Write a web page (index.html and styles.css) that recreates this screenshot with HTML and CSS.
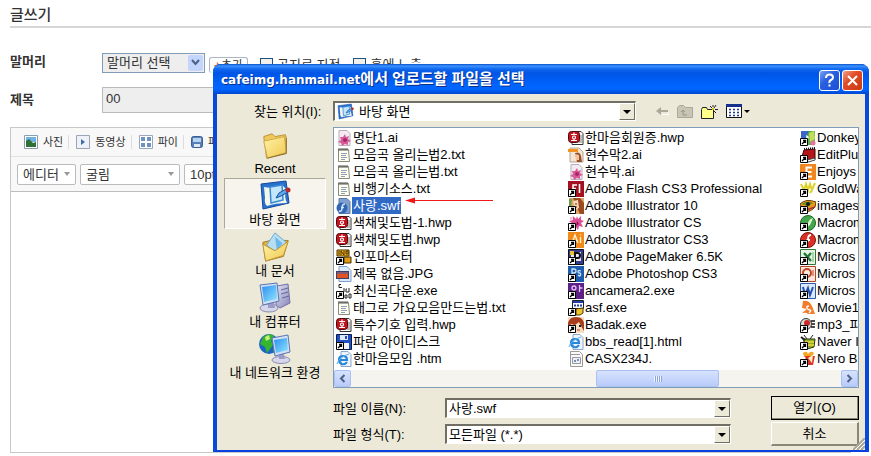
FILE: index.html
```html
<!DOCTYPE html>
<html lang="ko">
<head>
<meta charset="UTF-8" />
<meta name="viewport" content="width=device-width, initial-scale=1" />
<title>글쓰기</title>
<link rel="stylesheet" href="styles.css">
</head>
<body>

<!-- 아이콘 -->
<svg class="sprite" width="0" height="0" aria-hidden="true">
  <defs>
    <linearGradient id="gFolder" x1="0" y1="0" x2="1" y2="1"><stop offset="0" stop-color="#fff3a8"/><stop offset="1" stop-color="#f0c850"/></linearGradient>
    <linearGradient id="gScreen" x1="0" y1="0" x2="1" y2="1"><stop offset="0" stop-color="#2c8ff0"/><stop offset="1" stop-color="#8fe6ff"/></linearGradient>
    <linearGradient id="gCase" x1="0" y1="0" x2="1" y2="1"><stop offset="0" stop-color="#e4e4f6"/><stop offset="1" stop-color="#8484b8"/></linearGradient>
  </defs>

  <symbol id="cut" viewBox="0 0 16 16"><path d="M.5 8.500h7v7h-7z" fill="#fff" stroke="#000"/><path d="M2 14l3-3M3 10.500h2.500V13" stroke="#000" stroke-width="1.300" fill="none"/></symbol>
  <symbol id="desktop" viewBox="0 0 32 32"><path d="M2 5l25-3 3 22-26 6z" fill="#2a70cf" stroke="#124a9c"/><path d="M5 8q10 2 18-2l4 4q-2 8 1 14-12 0-20 3-3-3-2-8z" fill="#f3f7ea"/><path d="M11 8l12-2 1 15-12 3z" fill="#c4e6fb" stroke="#3788d5" stroke-width="1.500"/><path d="M17 19l3-5 7-4 2 3-7 4z" fill="#5fa9e8" stroke="#15509e"/><circle cx="29" cy="11" r="2.500" fill="#b72b2b"/></symbol>
  <symbol id="folder" viewBox="0 0 32 32"><path d="M4 7l9-3 3 3 11-2 1 3v17L7 30z" fill="#efc95c" stroke="#b58f34"/><path d="M4 12l22-5 2 17L8 30z" fill="url(#gFolder)" stroke="#d2a845"/><path d="M8 30l20-5V9" stroke="#866b2b" fill="none"/></symbol>
  <symbol id="documents" viewBox="0 0 32 32"><path d="M3 11l8-2 19 0-5 17L6 31z" fill="#e2b145" stroke="#a47c20"/><path d="M16 1l12 10-9 12-12-9z" fill="#b8def4" stroke="#6ba9cf"/><path d="M16 5l8 7-6 8" fill="#6cb8e8"/><path d="M3 13l13 7 14-10-5 15L6 31z" fill="url(#gFolder)" stroke="#c0912e"/></symbol>
  <symbol id="computer" viewBox="0 0 32 32"><path d="M18 5l11-2 2 19-10 5-4-3z" fill="url(#gCase)" stroke="#7272a6"/><path d="M22 9l7-2M22 13l7-2M23 17l7-2" stroke="#66669a"/><ellipse cx="10" cy="27" rx="9" ry="4" fill="#d6d6ec" stroke="#8a8ab0"/><path d="M9 20h6l1 7h-7z" fill="#9c9cc8"/><path d="M1 4l17-2 2 18-16 4z" fill="#d5dff4" stroke="#5577b5"/><path d="M3 6l14-2 1 14-13 3z" fill="url(#gScreen)"/></symbol>
  <symbol id="network" viewBox="0 0 32 32"><circle cx="10" cy="12" r="10" fill="#1b64c4"/><path d="M4 5q6-5 11-1l-3 5 2 4-6 8-2-6-5-3zM14 17l5-4v6l-4 3z" fill="#37b42e"/><path d="M6 5l4-2 1 4-4 2z" fill="#c7f07a"/><ellipse cx="22" cy="28" rx="9" ry="3.500" fill="#d6d6ec" stroke="#8a8ab0"/><path d="M20 22h5l1 5h-6z" fill="#9c9cc8"/><path d="M13 6l16-3 2 17-15 4z" fill="#d5dff4" stroke="#5577b5"/><path d="M15 8l13-2 1 12-12 3z" fill="url(#gScreen)"/></symbol>

  <symbol id="ai-pink" viewBox="0 0 16 16"><path d="M3 .5h8l3 3v12H3z" fill="#f2ecf2" stroke="#b9adb9"/><path d="M9 4l1 3 3-1-1 3 3 2-3 1v3l-3-1-3 2-1-3-3-1 3-2-1-3 3 0z" fill="#d95a98"/><circle cx="9" cy="10" r="2" fill="#a72567"/></symbol>
  <symbol id="txt" viewBox="0 0 16 16"><path d="M2.500 2.500h10l1 12h-11z" fill="#fffef2" stroke="#8a8a78"/><path d="M3 1v3M5 1v3M7 1v3M9 1v3M11 1v3" stroke="#555"/><path d="M5 6.500h6M5 8.500h5M5 10.500h6M5 12.500h4" stroke="#8fa0b0"/></symbol>
  <symbol id="swf" viewBox="0 0 16 16"><path d="M3 .5h8l3 3v12H3z" fill="#7f9fce" stroke="#5878ac"/><circle cx="6" cy="10" r="5.500" fill="#2e66b4"/><path d="M9 6q-3 0-3 4t-3 3M5 9.500h3" stroke="#d5e4fa" fill="none" stroke-width="1.500"/></symbol>
  <symbol id="hwp" viewBox="0 0 16 16"><path d="M7 1.500h6l2 2v11H4V8z" fill="#fff" stroke="#333"/><path d="M11 6h3M11 8h3M11 10h3M11 12h3" stroke="#777"/><rect x=".5" y="1.500" width="11" height="11" rx="3" fill="#c4141f" stroke="#4c060a"/><path d="M6 2.500v2M3 4.500h6M6 9v1.500M3 10.500h6" stroke="#fff" stroke-width="1.200"/><circle cx="6" cy="7.500" r="1.500" stroke="#fff" stroke-width="1.200" fill="none"/></symbol>
  <symbol id="info" viewBox="0 0 16 16"><path d="M1 1h12v6H1z" fill="#f5b81c" stroke="#4a2e00"/><path d="M3 2v4M5 6V2l3 4V2M10 2h2v3h-2z" stroke="#4a2e00" fill="none"/><path d="M8 8h7v6H8z" fill="#e09b14" stroke="#4a2e00"/></symbol>
  <symbol id="jpg" viewBox="0 0 16 16"><path d="M3 .5h8l4 4v11H3z" fill="#dbe8f8" stroke="#7f9fcc"/><path d="M0 5h13v8H0z" fill="#3a3f6c"/><path d="M1 8h11v4H1z" fill="#e0541f"/><path d="M1 6h11v2H1z" fill="#8a5a70"/></symbol>
  <symbol id="cdown" viewBox="0 0 16 16"><path d="M5 1.500H3v3h3M8 5v4M11 6h-1v3h3V5M9 12h2v3H9zM13 11h2v4h-2z" stroke="#222" fill="none"/></symbol>
  <symbol id="disk" viewBox="0 0 16 16"><path d="M.5.500h15v15H2l-1.500-2z" fill="#1e50c0" stroke="#081a50"/><path d="M4 1h8v5H4z" fill="#dfe9fa"/><path d="M9 2h2v3H9z" fill="#1e50c0"/><path d="M4 9h9v6H4z" fill="#f4f4f4"/></symbol>
  <symbol id="ie" viewBox="0 0 16 16"><path d="M5 .5h7l3 3v12H5z" fill="#eef4fd" stroke="#8aa5cf"/><path d="M11 11q-2 3-5 2-3-1-3-4 0-4 4-4t4 4H4" stroke="#2a86d8" stroke-width="2.200" fill="none"/><path d="M1 13Q3 6 13 3" stroke="#57b4f0" fill="none"/></symbol>
  <symbol id="ai-face" viewBox="0 0 16 16"><path d="M2 1h9l4 4v10H2z" fill="#f4e6d4" stroke="#b3a38f"/><path d="M0 2h10v3H0z" fill="#f59322"/><path d="M7 6q5-2 6 3l1 6H9z" fill="#96502a"/><path d="M7 7l4 1v5H8z" fill="#f3c49c"/></symbol>
  <symbol id="venus" viewBox="0 0 16 16"><path d="M1 0h15v16H1z" fill="#dca46b"/><path d="M5 0h7l4 5v11h-4z" fill="#9b4a1f"/><path d="M5 3l5-1 1 8-4 2z" fill="#fbd6b4"/><path d="M1 1l3 0-1 8H1z" fill="#6c9c48"/><path d="M7 6h2M8 9h1" stroke="#6b2b12"/></symbol>
  <symbol id="fl" viewBox="0 0 16 16"><path d="M0 0h16v16H0z" fill="#a50f22"/><path d="M5 12V4h4M5 7.500h3M11.500 3v9" stroke="#fff" stroke-width="1.600" fill="none"/></symbol>
  <symbol id="flower" viewBox="0 0 16 16"><path d="M9 1l1 3 3-3v4l3 1-3 2 2 4-4-1-1 4-3-4-4 1 1-4-3-2 4-1V1l3 3z" fill="#db4d95"/><path d="M9 6l2 3-3 2z" fill="#8b1857"/><path d="M2 3h3M3 2v4" stroke="#f4a8cc"/></symbol>
  <symbol id="ai" viewBox="0 0 16 16"><path d="M0 0h16v16H0z" fill="#f08a1a"/><path d="M4 11l3-8 3 8M5 8.500h4M12.500 5v6M12.500 2.500v1" stroke="#fff0c8" stroke-width="1.400" fill="none"/></symbol>
  <symbol id="pm" viewBox="0 0 16 16"><path d="M.5.500h15v15H.5z" fill="#333b8c" stroke="#111"/><path d="M3 3h10v9H3z" fill="#e9e7f4"/><path d="M7 13V4h3q2 0 2 2.500T10 9H8" stroke="#111" stroke-width="2" fill="none"/><path d="M2 2h4v4H2z" fill="#e9bf3e"/></symbol>
  <symbol id="ps" viewBox="0 0 16 16"><path d="M0 0h16v16H0z" fill="#1d5dac"/><path d="M4 10V3h2q2 0 2 2T6 7H4M13 5q-3-1-3 .5t1.500 1.500T12.500 9 10 9" stroke="#cfe6ff" stroke-width="1.300" fill="none"/></symbol>
  <symbol id="an" viewBox="0 0 16 16"><path d="M0 0h16v16H0z" fill="#5b2185"/><circle cx="6" cy="5" r="2" stroke="#eabfff" fill="none" stroke-width="1.300"/><path d="M11.500 2v7M11.500 5h3" stroke="#eabfff" stroke-width="1.300" fill="none"/></symbol>
  <symbol id="asf" viewBox="0 0 16 16"><path d="M4.500.500h11v8h-11z" fill="#fff" stroke="#222"/><path d="M5 1h10v2H5z" fill="#1d3fa8"/><path d="M6 5.500h2m1 0h2m1 0h2" stroke="#1d3fa8" stroke-width="2"/><path d="M8 9l7-1v5l-3 2H8z" fill="#efc72d" stroke="#4d3b00"/></symbol>
  <symbol id="girl" viewBox="0 0 16 16"><path d="M0 0h16v16H0z" fill="#f5dfc0"/><path d="M0 8Q0 0 8 0t8 8v6l-3-5-2-4-4 3-4-1-3 5z" fill="#a83c1c"/><path d="M6 9h2M11 9h2" stroke="#222" stroke-width="2"/><path d="M9 13h3" stroke="#c33"/></symbol>
  <symbol id="css" viewBox="0 0 16 16"><path d="M2.500.500h9l3 3v12h-12z" fill="#fafafa" stroke="#999"/><path d="M3 3.500h9M4.500 6.500h8v6h-8z" stroke="#999" fill="#eef"/><path d="M6 9h2v2H6zM9 8h2v2H9z" fill="#7d8fb0"/></symbol>
  <symbol id="donkey" viewBox="0 0 16 16"><path d="M1 1h14v14H1z" fill="#5ab04a"/><path d="M1 1h8L6 8 1 9z" fill="#3c67c8"/><path d="M9 3l5-2 1 8-5 3z" fill="#c4dd55"/><circle cx="13" cy="13" r="2.500" fill="#e7749d"/><path d="M6 5l3 2-2 4z" fill="#fff"/></symbol>
  <symbol id="edit" viewBox="0 0 16 16"><path d="M4 3l11-1v10l-11 3-3-2z" fill="#b5141b" stroke="#3e0305"/><path d="M4 2l11-1" stroke="#111" stroke-width="2" stroke-dasharray="1 1"/><path d="M3 14l12-3v2L5 16z" fill="#fff" stroke="#444"/></symbol>
  <symbol id="enjoy" viewBox="0 0 16 16"><path d="M0 0h16v16H0z" fill="#f08620"/><path d="M12 3.500H6.500v9H12M6.500 8h5" stroke="#fff" stroke-width="2" fill="none"/></symbol>
  <symbol id="gold" viewBox="0 0 16 16"><path d="M1 3l3 6 2-6 2 6 2-6 2 6 3-7M4 9l2 3M12 9l-2 3" stroke="#ddd12b" stroke-width="2" fill="none"/></symbol>
  <symbol id="images" viewBox="0 0 16 16"><path d="M0 6q6-6 16-2l-1 5q-4 5-11 5z" fill="#e79a20" stroke="#6a3c05"/><path d="M1 6q7-4 12-1L8 8z" fill="#6d8d1e"/><circle cx="8" cy="6" r="2" fill="#1a1a1a"/><path d="M6 12l9-3" stroke="#a33" stroke-width="1.500"/></symbol>
  <symbol id="green" viewBox="0 0 16 16"><circle cx="8" cy="8" r="7.500" fill="#43a648" stroke="#1d6a2b"/><path d="M13 3q-4 1-5 5t-4 4q5 1 7-4z" fill="#e2f7d0"/></symbol>
  <symbol id="red" viewBox="0 0 16 16"><circle cx="8" cy="8" r="7.500" fill="#d93025" stroke="#7f130b"/><path d="M11 3Q8 3 8 7t-3 5M6.500 8H10" stroke="#fff" stroke-width="1.800" fill="none"/></symbol>
  <symbol id="xls" viewBox="0 0 16 16"><path d="M.5.500h15v15H.5z" fill="#e7f3e4" stroke="#2b7a3a"/><path d="M4 4l7 8M11 4l-7 8" stroke="#1f7a35" stroke-width="2.400"/><path d="M13 3v10" stroke="#6cb077"/></symbol>
  <symbol id="ppt" viewBox="0 0 16 16"><path d="M.5.500h15v15H.5z" fill="#fbe6dc" stroke="#b2452b"/><circle cx="7" cy="7" r="4" fill="none" stroke="#bf4527" stroke-width="2"/><path d="M12 5h2M12 7h2M12 9h2" stroke="#bf4527"/></symbol>
  <symbol id="doc" viewBox="0 0 16 16"><path d="M.5.500h15v15H.5z" fill="#dde9fb" stroke="#2b58ae"/><path d="M3 4l2 8 3-7 2 7 3-8" stroke="#2450a8" stroke-width="2" fill="none"/></symbol>
  <symbol id="movie" viewBox="0 0 16 16"><path d="M3 1q6-1 9 5l3 8H8q-1-2-6-1l5-4-5-1z" fill="#f07c2c"/><path d="M9 6q-3 0-2 2t3 2-1 3" stroke="#fff" fill="none" stroke-width="1.400"/></symbol>
  <symbol id="mp3" viewBox="0 0 16 16"><circle cx="6" cy="7" r="5.500" fill="#d9d9d9" stroke="#333"/><circle cx="7" cy="6" r="3" fill="#c92828"/><path d="M11 4h4M12 7h3M11 10h4" stroke="#111" stroke-width="1.600"/></symbol>
  <symbol id="naver" viewBox="0 0 16 16"><path d="M4 1l3 4M13 1l-3 4" stroke="#222"/><path d="M3 5h12l-1 8-7 2z" fill="#8cae2c" stroke="#26380a"/><path d="M5 8h9M7 11h7" stroke="#f2d743" stroke-width="1.600"/><path d="M1 3l4 3" stroke="#222" stroke-width="2"/></symbol>
  <symbol id="nero" viewBox="0 0 16 16"><path d="M3 2q4-3 5 1 3-4 6-1l-2 4H4z" fill="#f5a623"/><path d="M5 5h10l-2 9H7z" fill="#d9362b"/><path d="M8 7l5-3-1 8z" fill="#fff1c0"/></symbol>
</svg>

<main class="write-page">
  <h1>글쓰기</h1>

  <div class="form-row">
    <label class="row-title" for="headword">말머리</label>
    <span class="head-select">
      <select id="headword"><option>말머리 선택</option></select>
      <span class="luna-arrow"><svg width="9" height="7" viewBox="0 0 9 7"><path d="M1 1l3.500 4L8 1" fill="none" stroke="#4d6185" stroke-width="2"/></svg></span>
    </span>
    <button type="button" class="add-btn"><b>+</b>추가</button>
    <input type="checkbox" id="notice" class="check"><label for="notice">공지로 지정</label>
    <input type="checkbox" id="home" class="check"><label for="home">홈에 노출</label>
  </div>

  <div class="form-row">
    <label class="row-title" for="subject">제목</label>
    <input type="text" id="subject" value="00">
  </div>

  <section class="editor">
    <div class="attach-bar">
      <button type="button"><svg width="14" height="14" viewBox="0 0 14 14"><path d="M.5.500h13v13H.5z" fill="#fff" stroke="#8d9db0"/><path d="M2 2h10v5H2z" fill="#6fb2e6"/><path d="M2 6l3-2 4 4 3-1v5H2z" fill="#2f7134"/></svg>사진</button>
      <button type="button"><svg width="14" height="14" viewBox="0 0 14 14"><path d="M.5.500h13v13H.5z" fill="#eef2f8" stroke="#9aa6b8"/><path d="M5 4l4 3-4 3z" fill="#3f6ca8"/></svg>동영상</button>
      <button type="button"><svg width="14" height="14" viewBox="0 0 14 14"><path d="M.5.500h13v13H.5z" fill="#fff" stroke="#9aa6b8"/><path d="M2 2h4v4H2zM8 2h4v4H8zM2 8h4v4H2zM8 8h4v4H8z" fill="#6d92c2"/></svg>파이</button>
      <button type="button"><svg width="12" height="14" viewBox="0 0 12 14"><rect x=".5" y="1.500" width="11" height="11" rx="2" fill="#5580b8" stroke="#3c5f92"/><path d="M2 3h8v4H2z" fill="#b9d2ee"/><path d="M3 9h6v3H3z" fill="#dfe9f5"/></svg>파일</button>
    </div>
    <div class="format-bar">
      <span class="flat-select mode"><select aria-label="모드"><option>에디터</option></select></span>
      <span class="flat-select face"><select aria-label="글꼴"><option>굴림</option></select></span>
      <span class="flat-select size"><select aria-label="크기"><option>10pt</option></select></span>
    </div>
    <div class="editor-body"></div>
  </section>
</main>

<!-- 파일 선택 창 -->
<div class="dialog" role="dialog" aria-labelledby="dialogTitle">
  <div class="title-bar">
    <h2 id="dialogTitle"><span>cafeimg.hanmail.net</span>에서 업로드할 파일을 선택</h2>
    <button type="button" class="help" aria-label="도움말"><svg width="15" height="15" viewBox="0 0 15 15"><path d="M4 5q0-3.500 3.500-3.500T11 4.500q0 1.500-2 2.500T7.500 10M7.500 11.500v2" fill="none" stroke="#fff" stroke-width="2"/></svg></button>
    <button type="button" class="close" aria-label="닫기"><svg width="15" height="15" viewBox="0 0 15 15"><path d="M3 3l9 9M12 3l-9 9" stroke="#fff" stroke-width="2"/></svg></button>
  </div>

  <div class="dialog-body">
    <div class="lookup">
      <label for="lookIn">찾는 위치(I):</label>
      <span class="combo">
        <svg width="17" height="17"><use href="#desktop"/></svg>
        <select id="lookIn"><option>바탕 화면</option></select>
        <span class="combo-btn"></span>
      </span>
      <div class="tools">
        <button type="button" aria-label="뒤로"><svg width="13" height="10" viewBox="0 0 13 10"><path d="M6 8.500h7V6" stroke="#fff" fill="none"/><path d="M0 5l5-4v3h7v2H5v3z" fill="#aca899"/></svg></button>
        <button type="button" aria-label="한 수준 위로"><svg width="16" height="14" viewBox="0 0 16 14"><path d="M.5 3.500l2-2h4l2 2h7v10H.5z" fill="#c9c5b5" stroke="#aca899"/><path d="M6 11V6M4 8l2-2 2 2M6 11h4" fill="none" stroke="#98947f"/></svg></button>
        <button type="button" aria-label="새 폴더"><svg width="17" height="15" viewBox="0 0 17 15"><path d="M.5 5.500l1-2h4l1 2h6v9H.5z" fill="#ffff8a" stroke="#222"/><path d="M12 1v2M9 2l2 2M15 1l-2 3M14 5.500h3M13 7l2 2" stroke="#222"/><path d="M12 4v2" stroke="#d8b800" stroke-width="2"/></svg></button>
        <button type="button" aria-label="보기"><svg width="24" height="14" viewBox="0 0 24 14"><path d="M.5.500h15v13H.5z" fill="#fff" stroke="#111"/><path d="M0 0h16v3H0z" fill="#16308c"/><path d="M3 5.500h2m2 0h2m2 0h2M3 8.500h2m2 0h2m2 0h2M3 11.500h2m2 0h2m2 0h2" stroke="#223a8c" stroke-width="1.500"/><path d="M18 6h6l-3 3z" fill="#000"/></svg></button>
      </div>
    </div>

    <div class="dialog-main">
      <nav class="places">
        <button type="button"><svg width="30" height="30"><use href="#folder"/></svg>Recent</button>
        <button type="button" class="active"><svg width="32" height="32"><use href="#desktop"/></svg>바탕 화면</button>
        <button type="button"><svg width="30" height="30"><use href="#documents"/></svg>내 문서</button>
        <button type="button"><svg width="32" height="32"><use href="#computer"/></svg>내 컴퓨터</button>
        <button type="button"><svg width="32" height="32"><use href="#network"/></svg>내 네트워크 환경</button>
      </nav>

      <div class="files">
        <div class="list-box">
          <ul class="file-list">
            <li><svg><use href="#ai-pink"/></svg><span>명단1.ai</span></li>
            <li><svg><use href="#txt"/></svg><span>모음곡 올리는법2.txt</span></li>
            <li><svg><use href="#txt"/></svg><span>모음곡 올리는법.txt</span></li>
            <li><svg><use href="#txt"/></svg><span>비행기소스.txt</span></li>
            <li class="selected"><svg><use href="#swf"/></svg><span>사랑.swf</span><svg class="pointer" viewBox="0 0 88 7"><path d="M8 3.500h80" stroke="#f01818"/><path d="M0 3.500l10-3v6z" fill="#f01818"/></svg></li>
            <li><svg><use href="#hwp"/></svg><span>색채및도법-1.hwp</span></li>
            <li><svg><use href="#hwp"/></svg><span>색채및도법.hwp</span></li>
            <li><svg><use href="#info"/><use href="#cut"/></svg><span>인포마스터</span></li>
            <li><svg><use href="#jpg"/></svg><span>제목 없음.JPG</span></li>
            <li><svg><use href="#cdown"/><use href="#cut"/></svg><span>최신곡다운.exe</span></li>
            <li><svg><use href="#txt"/></svg><span>태그로 가요모음만드는법.txt</span></li>
            <li><svg><use href="#hwp"/></svg><span>특수기호 입력.hwp</span></li>
            <li><svg><use href="#disk"/><use href="#cut"/></svg><span>파란 아이디스크</span></li>
            <li><svg><use href="#ie"/></svg><span>한마음모임 .htm</span></li>

            <li><svg><use href="#hwp"/></svg><span>한마음회원증.hwp</span></li>
            <li><svg><use href="#ai-face"/></svg><span>현수막2.ai</span></li>
            <li><svg><use href="#ai-pink"/></svg><span>현수막.ai</span></li>
            <li><svg><use href="#fl"/><use href="#cut"/></svg><span>Adobe Flash CS3 Professional</span></li>
            <li><svg><use href="#venus"/><use href="#cut"/></svg><span>Adobe Illustrator 10</span></li>
            <li><svg><use href="#flower"/><use href="#cut"/></svg><span>Adobe Illustrator CS</span></li>
            <li><svg><use href="#ai"/><use href="#cut"/></svg><span>Adobe Illustrator CS3</span></li>
            <li><svg><use href="#pm"/><use href="#cut"/></svg><span>Adobe PageMaker 6.5K</span></li>
            <li><svg><use href="#ps"/><use href="#cut"/></svg><span>Adobe Photoshop CS3</span></li>
            <li><svg><use href="#an"/><use href="#cut"/></svg><span>ancamera2.exe</span></li>
            <li><svg><use href="#asf"/><use href="#cut"/></svg><span>asf.exe</span></li>
            <li><svg><use href="#girl"/><use href="#cut"/></svg><span>Badak.exe</span></li>
            <li><svg><use href="#ie"/></svg><span>bbs_read[1].html</span></li>
            <li><svg><use href="#css"/></svg><span>CASX234J.</span></li>

            <li><svg><use href="#donkey"/><use href="#cut"/></svg><span>Donkey</span></li>
            <li><svg><use href="#edit"/><use href="#cut"/></svg><span>EditPlu</span></li>
            <li><svg><use href="#enjoy"/><use href="#cut"/></svg><span>Enjoys</span></li>
            <li><svg><use href="#gold"/><use href="#cut"/></svg><span>GoldWa</span></li>
            <li><svg><use href="#images"/><use href="#cut"/></svg><span>images</span></li>
            <li><svg><use href="#green"/><use href="#cut"/></svg><span>Macrom</span></li>
            <li><svg><use href="#red"/><use href="#cut"/></svg><span>Macrom</span></li>
            <li><svg><use href="#xls"/><use href="#cut"/></svg><span>Micros</span></li>
            <li><svg><use href="#ppt"/><use href="#cut"/></svg><span>Micros</span></li>
            <li><svg><use href="#doc"/><use href="#cut"/></svg><span>Micros</span></li>
            <li><svg><use href="#movie"/></svg><span>Movie1</span></li>
            <li><svg><use href="#mp3"/><use href="#cut"/></svg><span>mp3_피</span></li>
            <li><svg><use href="#naver"/><use href="#cut"/></svg><span>Naver I</span></li>
            <li><svg><use href="#nero"/><use href="#cut"/></svg><span>Nero B</span></li>
          </ul>
          <div class="scrollbar">
            <button type="button" aria-label="왼쪽"><svg width="7" height="9" viewBox="0 0 7 9"><path d="M5.500 1L2 4.500 5.500 8" fill="none" stroke="#4d6185" stroke-width="2"/></svg></button>
            <div class="track"><div class="thumb"><i></i><i></i><i></i><i></i></div></div>
            <button type="button" aria-label="오른쪽"><svg width="7" height="9" viewBox="0 0 7 9"><path d="M1.500 1L5 4.500 1.500 8" fill="none" stroke="#4d6185" stroke-width="2"/></svg></button>
          </div>
        </div>

        <form class="file-form">
          <label for="fileName">파일 이름(N):</label>
          <span class="combo">
            <input type="text" id="fileName" value="사랑.swf">
            <button type="button" class="combo-btn" aria-label="목록"></button>
          </span>
          <button type="button" class="push default">열기(O)</button>
          <label for="fileType">파일 형식(T):</label>
          <span class="combo">
            <select id="fileType"><option>모든파일 (*.*)</option></select>
            <span class="combo-btn"></span>
          </span>
          <button type="button" class="push">취소</button>
        </form>
      </div>
    </div>
    <svg class="grip" width="12" height="12" viewBox="0 0 12 12"><path d="M0 12L12 0M4 12l8-8M8 12l4-4" stroke="#aca899" stroke-width="2"/><path d="M2 12L12 2M6 12l6-6" stroke="#fff"/></svg>
  </div>
</div>

</body>
</html>
```

FILE: styles.css
```css
* {
  box-sizing: border-box;
}

body {
  margin: 0;
  background: #fff;
  color: #000;
  font-family: "Liberation Sans", "Noto Sans CJK KR", sans-serif;
  font-size: 13px;
  line-height: 17px;
  position: relative;
}

h1, h2, ul {
  margin: 0;
  padding: 0;
}

button, input, select {
  font: inherit;
  color: inherit;
  margin: 0;
  padding: 0;
  border: 0;
  background: none;
}

select {
  appearance: none;
  width: 100%;
}

svg {
  display: block;
  flex: none;
}

.sprite {
  position: absolute;
}

/* 글쓰기 */
.write-page {
  padding-left: 10px;
  color: #333;
}

.write-page h1 {
  font-size: 15px;
  line-height: 20px;
  font-weight: 500;
  padding: 5px 0 1px;
  border-bottom: 2px solid #d6d6d6;
  margin-bottom: 24px;
}

.form-row {
  display: flex;
  align-items: center;
  margin-bottom: 14px;
}

.row-title {
  width: 92px;
  font-weight: bold;
  margin-top: -2px;
}

.head-select {
  display: flex;
  align-items: center;
  width: 103px;
  height: 20px;
  border: 1px solid #7f9db9;
  background: #eee;
  padding: 0 1px 0 4px;
}

.luna-arrow {
  display: flex;
  align-items: center;
  justify-content: center;
  flex: none;
  width: 15px;
  height: 16px;
  border-radius: 2px;
  background: #c3d5fd;
}

.add-btn {
  width: 39px;
  height: 16px;
  margin: 4px 12px 0 4px;
  border: 1px solid #aab4c4;
  border-bottom: 0;
  border-radius: 3px;
  font-size: 12px;
  line-height: 16px;
}

.add-btn b {
  color: #e8641b;
}

.check {
  appearance: none;
  width: 13px;
  height: 13px;
  border: 1px solid #1c5180;
  background: #f1f1ec;
  margin: 4px 4px 0 0;
}

.check + label {
  margin: 4px 13px 0 0;
}

#subject {
  flex: 1;
  height: 26px;
  padding: 0 3px 4px;
  border: 1px solid #bbb;
  background: #eee;
  margin-right: 20px;
}

.editor {
  border: 1px solid #c9c9c9;
  margin-right: 20px;
}

.attach-bar {
  display: flex;
  align-items: center;
  height: 29px;
  padding-left: 6px;
  background: #f8f8f8;
  border-bottom: 1px solid #e2e2e2;
  font-size: 11px;
}

.attach-bar button {
  display: flex;
  align-items: center;
  gap: 5px;
  height: 14px;
  padding: 0 5px 0 7px;
  border-right: 1px solid #ddd;
}

.format-bar {
  display: flex;
  align-items: center;
  gap: 4px;
  height: 35px;
  padding-left: 6px;
  background: #f8f8f8;
  border-bottom: 1px solid #bdbdbd;
}

.flat-select {
  display: flex;
  align-items: center;
  height: 21px;
  padding: 0 5px;
  border: 1px solid #bbb;
  border-radius: 2px;
  background: #fff;
}

.flat-select::after {
  content: "";
  flex: none;
  border: 3px solid transparent;
  border-top: 4px solid #999;
  border-bottom: 0;
}

.mode {
  width: 59px;
}

.face {
  width: 100px;
}

.size {
  width: 60px;
}

.editor-body {
  height: 260px;
}

/* 파일 선택 창 */
.dialog {
  position: absolute;
  top: 64px;
  left: 213px;
  right: 2px;
  border: 4px solid #0a48dc;
  border-top: 0;
  border-bottom: 2px solid #0a3fe0;
  border-radius: 8px 8px 0 0;
  background: #0a48dc;
}

.title-bar {
  display: flex;
  align-items: center;
  gap: 2px;
  height: 30px;
  margin: 0 -4px;
  padding: 0 6px 0 8px;
  border-radius: 8px 8px 0 0;
  background: linear-gradient(#0b4fc8 0, #3b93ff 2px, #1268ee 5px, #0055e5 9px, #0062fb 20px, #0066ff 25px, #0047d0 30px);
}

.title-bar h2 {
  flex: 1;
  color: #fff;
  font-size: 15px;
  line-height: 20px;
  text-shadow: 1px 1px 0 #0a2f8c;
}

.title-bar h2 span {
  font-family: "DejaVu Sans", sans-serif;
  font-size: 12px;
}

.title-bar button {
  display: flex;
  align-items: center;
  justify-content: center;
  width: 21px;
  height: 21px;
  margin-top: 2px;
  border: 1px solid #fff;
  border-radius: 3px;
  background: linear-gradient(135deg, #7aa2f2, #2a5fe0 40%, #1c4fd6);
}

.title-bar .close {
  background: linear-gradient(135deg, #f0a088, #e04c26 40%, #c93a14);
}

.dialog-body {
  position: relative;
  background: #ece9d8;
  padding: 7px 6px 4px 7px;
}

.lookup {
  display: flex;
  align-items: center;
  height: 20px;
  margin-bottom: 6px;
}

.lookup label {
  width: 109px;
  padding-left: 30px;
}

.combo {
  display: flex;
  align-items: center;
  flex: 1;
  height: 20px;
  padding-left: 2px;
  border: 1px solid #fff;
  border-top: 2px solid #716f64;
  border-left: 2px solid #716f64;
  background: #fff;
}

.combo input {
  flex: 1;
  min-width: 0;
}

.lookup .combo select {
  padding-left: 5px;
}

.combo-btn {
  display: flex;
  align-items: center;
  justify-content: center;
  flex: none;
  width: 16px;
  height: 17px;
  border: 1px solid #fff;
  border-right-color: #716f64;
  border-bottom-color: #716f64;
  background: #ece9d8;
}

.combo-btn::before {
  content: "";
  border: 4px solid transparent;
  border-top-color: #000;
  border-bottom: 0;
}

.tools {
  display: flex;
  align-items: center;
  gap: 8px;
  width: 223px;
  padding-left: 20px;
}

.dialog-main {
  display: grid;
  grid-template-columns: 102px 1fr;
  column-gap: 7px;
}

.places button {
  display: flex;
  flex-direction: column;
  align-items: center;
  justify-content: flex-end;
  width: 100%;
  height: 51px;
  border: 1px solid transparent;
  white-space: nowrap;
}

.places .active {
  border-color: #aca899 #fff #fff #aca899;
  background: #f6f4ec;
}

.files {
  min-width: 0;
}

.list-box {
  border: 1px solid #7f9db9;
  background: #fff;
  overflow: hidden;
}

.file-list {
  display: grid;
  grid-template-rows: repeat(14, 17px);
  grid-auto-flow: column;
  grid-auto-columns: 232px;
  list-style: none;
  padding: 1px 0 3px 2px;
}

.file-list li {
  display: flex;
  align-items: center;
  white-space: nowrap;
}

.file-list svg {
  width: 16px;
  height: 16px;
}

.file-list span {
  padding: 0 1px;
}

.selected span {
  background: #316ac5;
  color: #fff;
}

.file-list .pointer {
  align-self: flex-start;
  width: 88px;
  height: 7px;
  margin-left: 4px;
}

.scrollbar {
  display: flex;
  height: 17px;
  background: #f5f4ee;
}

.scrollbar button, .thumb {
  display: flex;
  align-items: center;
  justify-content: center;
  border: 1px solid #a9c0f2;
  border-radius: 2px;
  background: linear-gradient(#d6e2fe, #b9cbfa);
}

.scrollbar button {
  width: 17px;
}

.track {
  flex: 1;
}

.thumb {
  gap: 1px;
  width: 25%;
  height: 17px;
  margin-left: 50%;
}

.thumb i {
  width: 1px;
  height: 6px;
  background: #f2f6ff;
  box-shadow: 1px 0 0 #8ca4e0;
}

.file-form {
  display: grid;
  grid-template-columns: 112px 1fr 88px;
  grid-auto-rows: 24px;
  row-gap: 2px;
  align-items: center;
  margin-top: 8px;
}

.file-form .combo {
  margin-right: 40px;
}

.push {
  height: 24px;
  border: 1px solid #fff;
  border-right: 2px solid #8a8776;
  border-bottom: 2px solid #8a8776;
  background: #ece9d8;
}

.push.default {
  outline: 1px solid #000;
  outline-offset: -1px;
}

.grip {
  position: absolute;
  right: 0;
  bottom: 0;
}
```
